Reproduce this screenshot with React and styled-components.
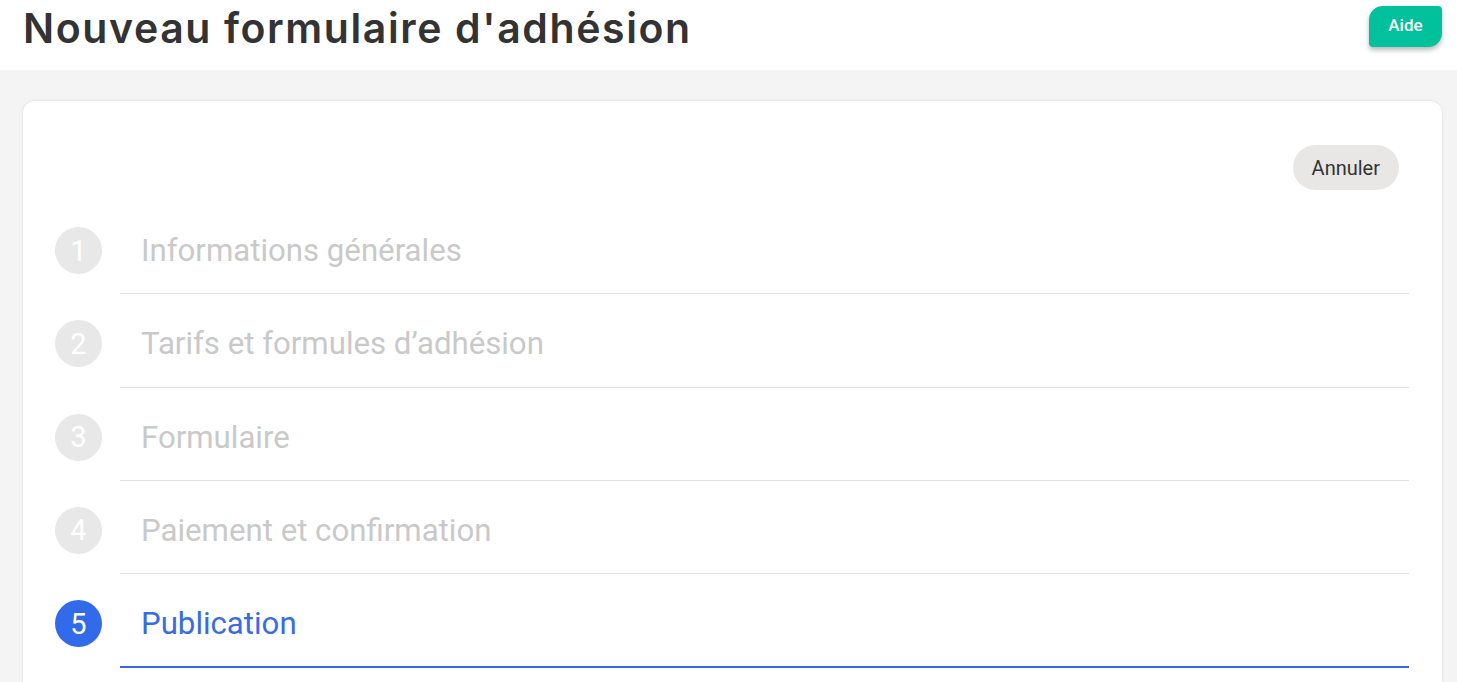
import React from "react";
import styled, { createGlobalStyle } from "styled-components";

const GlobalStyle = createGlobalStyle`
    html, body {
        margin: 0;
        padding: 0;
        background: #f4f4f4;
        font-family: Roboto, "Liberation Sans", sans-serif;
    }
`;

const STEPS = [
    "Informations générales",
    "Tarifs et formules d’adhésion",
    "Formulaire",
    "Paiement et confirmation",
    "Publication",
];

function App() {
    const current = 5;

    return (
        <>
            <GlobalStyle />
            <Header>
                <Title>Nouveau formulaire d'adhésion</Title>
                <HelpBtn>Aide</HelpBtn>
            </Header>

            <Main>
                <Card>
                    <Actions>
                        <CancelBtn>Annuler</CancelBtn>
                    </Actions>

                    <Steps>
                        {STEPS.map((label, i) => {
                            const active = i + 1 === current;
                            return (
                                <Step key={label}>
                                    <Bullet $active={active}>{i + 1}</Bullet>
                                    <StepBody $active={active}>
                                        <StepLabel $active={active}>{label}</StepLabel>
                                    </StepBody>
                                </Step>
                            );
                        })}
                    </Steps>
                </Card>
            </Main>
        </>
    );
}

export default App;

const Header = styled.header`
    height: 70px;
    background: #fff;
    display: flex;
    align-items: flex-start;
    justify-content: space-between;
    padding: 0 15px 0 23px;
`;

const Title = styled.h1`
    margin: 0;
    padding-top: 2px;
    font-family: Inter, "Noto Sans", sans-serif;
    font-weight: 600;
    font-size: 41px;
    line-height: 52px;
    letter-spacing: 1.6px;
    color: #333;
`;

const HelpBtn = styled.button`
    margin-top: 6px;
    width: 73px;
    height: 41px;
    border: none;
    border-radius: 14px 4px 14px 4px;
    background: #00c19b;
    color: #fff;
    font-family: Roboto, sans-serif;
    font-weight: 500;
    font-size: 17px;
    box-shadow: 0 3px 5px rgba(0, 0, 0, 0.28);
    padding: 0 0 4px;
    cursor: pointer;
`;

const Main = styled.main`
    padding: 31px 15px 0 23px;
`;

const Card = styled.section`
    background: #fff;
    border-radius: 12px;
    box-shadow: 0 0 3px rgba(0, 0, 0, 0.12);
    padding: 44px 33px 40px 32px;
    min-height: 620px;
`;

const Actions = styled.div`
    display: flex;
    justify-content: flex-end;
    padding-right: 10px;
`;

const CancelBtn = styled.button`
    height: 45px;
    padding: 0 19px;
    border: none;
    border-radius: 23px;
    background: #e8e7e6;
    color: #333;
    font-family: Roboto, sans-serif;
    font-size: 20px;
    cursor: pointer;
`;

const Steps = styled.ol`
    list-style: none;
    margin: 11px 0 0;
    padding: 0;
`;

const Step = styled.li`
    display: flex;
    align-items: flex-start;
    gap: 18px;
`;

const Bullet = styled.span`
    flex: none;
    margin-top: 26px;
    width: 47px;
    height: 47px;
    border-radius: 50%;
    background: ${(p) => (p.$active ? "#326bea" : "#e8e8e8")};
    color: #fff;
    display: flex;
    align-items: center;
    justify-content: center;
    font-size: 29px;
`;

const StepBody = styled.div`
    flex: 1;
    padding: 26px 0 19.3px 21px;
    border-bottom: ${(p) => (p.$active ? "2px solid #3a67e0" : "1px solid #e2e2e2")};
`;

const StepLabel = styled.span`
    display: block;
    line-height: 47px;
    font-size: 31.2px;
    color: ${(p) => (p.$active ? "#3a6be6" : "#c9c9c9")};
`;
